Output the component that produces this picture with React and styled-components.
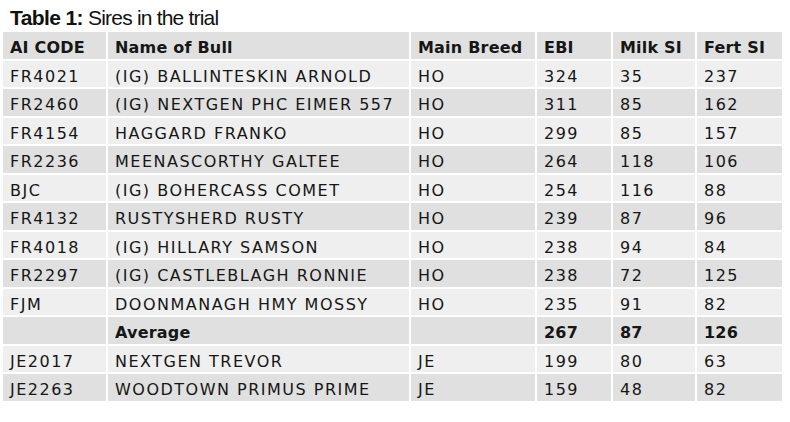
import React from "react";
import styled, { createGlobalStyle } from "styled-components";

const Global = createGlobalStyle`
  html, body { margin: 0; padding: 0; background: #ffffff; }
  body { font-family: "DejaVu Sans", sans-serif; color: #1a1a1a; }
`;

const Page = styled.div`
  width: 790px;
  height: 422px;
  padding: 6px 0 0 3px;
  box-sizing: border-box;
  display: flex;
  flex-direction: column;
  gap: 2px;
`;

const Title = styled.div`
  font-family: "Liberation Sans", Arial, sans-serif;
  font-size: 21px;
  line-height: 24px;
  letter-spacing: -0.8px;
  padding-left: 7px;
  color: #111;
  b { font-weight: 700; letter-spacing: -0.6px; }
`;

const Table = styled.div`
  display: grid;
  grid-template-columns: 103px 301px 124px 74px 82px 85px;
  grid-auto-rows: 26.5px;
  column-gap: 2px;
  row-gap: 2px;
  width: 779px;
`;

const Cell = styled.div`
  background: ${(p) => (p.$dark ? "#e0e0e0" : "#efefef")};
  display: flex;
  align-items: center;
  padding: 5px 0 0 7px;
  box-sizing: border-box;
  font-size: 16px;
  letter-spacing: ${(p) => (p.$bold ? "0.2px" : "1.5px")};
  font-weight: ${(p) => (p.$bold ? 700 : 400)};
  white-space: nowrap;
  overflow: hidden;
  color: #161616;
`;

const header = ["AI CODE", "Name of Bull", "Main Breed", "EBI", "Milk SI", "Fert SI"];

const rows = [
  ["FR4021", "(IG) BALLINTESKIN ARNOLD", "HO", "324", "35", "237"],
  ["FR2460", "(IG) NEXTGEN PHC EIMER 557", "HO", "311", "85", "162"],
  ["FR4154", "HAGGARD FRANKO", "HO", "299", "85", "157"],
  ["FR2236", "MEENASCORTHY GALTEE", "HO", "264", "118", "106"],
  ["BJC", "(IG) BOHERCASS COMET", "HO", "254", "116", "88"],
  ["FR4132", "RUSTYSHERD RUSTY", "HO", "239", "87", "96"],
  ["FR4018", "(IG) HILLARY SAMSON", "HO", "238", "94", "84"],
  ["FR2297", "(IG) CASTLEBLAGH RONNIE", "HO", "238", "72", "125"],
  ["FJM", "DOONMANAGH HMY MOSSY", "HO", "235", "91", "82"],
  ["", "Average", "", "267", "87", "126", true],
  ["JE2017", "NEXTGEN TREVOR", "JE", "199", "80", "63"],
  ["JE2263", "WOODTOWN PRIMUS PRIME", "JE", "159", "48", "82"],
];

export default function App() {
  return (
    <>
      <Global />
      <Page>
        <Title>
          <b>Table 1:</b> Sires in the trial
        </Title>
        <Table>
          {header.map((h) => (
            <Cell key={h} $dark $bold>
              {h}
            </Cell>
          ))}
          {rows.map((r, i) => {
            const dark = i % 2 === 1;
            const bold = r[6] === true;
            return r.slice(0, 6).map((c, j) => (
              <Cell key={i + "-" + j} $dark={dark} $bold={bold}>
                {c}
              </Cell>
            ));
          })}
        </Table>
      </Page>
    </>
  );
}
